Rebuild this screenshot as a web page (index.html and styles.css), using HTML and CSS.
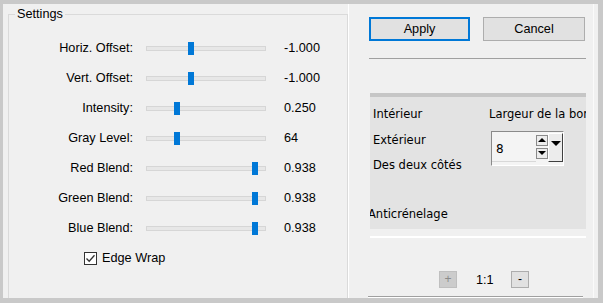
FILE: index.html
```html
<!DOCTYPE html>
<html lang="en">
<head>
  <meta charset="UTF-8" />
  <title>Settings</title>
  <link rel="stylesheet" href="styles.css">
</head>
<body>
  <div class="window">
    <fieldset class="settings">
      <legend>Settings</legend>

      <div class="row"><span class="label">Horiz. Offset:</span><div class="track"><span class="thumb" style="left:41px"></span></div><span class="value">-1.000</span></div>
      <div class="row"><span class="label">Vert. Offset:</span><div class="track"><span class="thumb" style="left:41px"></span></div><span class="value">-1.000</span></div>
      <div class="row"><span class="label">Intensity:</span><div class="track"><span class="thumb" style="left:27px"></span></div><span class="value">0.250</span></div>
      <div class="row"><span class="label">Gray Level:</span><div class="track"><span class="thumb" style="left:27px"></span></div><span class="value">64</span></div>
      <div class="row"><span class="label">Red Blend:</span><div class="track"><span class="thumb" style="left:105px"></span></div><span class="value">0.938</span></div>
      <div class="row"><span class="label">Green Blend:</span><div class="track"><span class="thumb" style="left:105px"></span></div><span class="value">0.938</span></div>
      <div class="row"><span class="label">Blue Blend:</span><div class="track"><span class="thumb" style="left:105px"></span></div><span class="value">0.938</span></div>

      <label class="check">
        <span class="box">
          <svg width="11" height="11" viewBox="0 0 11 11"><path d="M1.5 5.5 L4.2 8.3 L9.5 2.2" fill="none" stroke="#333" stroke-width="1.3"/></svg>
        </span>
        Edge Wrap
      </label>
    </fieldset>

    <div class="side">
      <div class="actions">
        <button class="btn default">Apply</button>
        <button class="btn">Cancel</button>
      </div>
      <div class="rule"></div>
      <div class="bar"></div>

      <div class="panel">
        <div class="col-left">
          <div class="opt">Intérieur</div>
          <div class="opt">Extérieur</div>
          <div class="opt">Des deux côtés</div>
          <div class="anti">Anticrénelage</div>
        </div>
        <div class="col-right">
          <div class="opt">Largeur de la bordure</div>
          <div class="spin">
            <span class="spin-value">8</span>
            <span class="spin-arrows">
              <span class="arrow up"></span>
              <span class="arrow down"></span>
            </span>
            <span class="drop"></span>
          </div>
        </div>
      </div>

      <div class="light-rule"></div>

      <div class="zoom">
        <button class="mini" disabled>+</button>
        <span class="ratio">1:1</span>
        <button class="mini">-</button>
      </div>
      <div class="rule bottom"></div>
    </div>
  </div>
</body>
</html>
```

FILE: styles.css
```css
body {
  margin: 0;
  font-family: "Liberation Sans", Arial, sans-serif;
  font-size: 12.7px;
  color: #000;
}

.window {
  width: 603px;
  height: 303px;
  box-sizing: border-box;
  border-style: solid;
  border-color: #c9c9c9;
  border-width: 4px 5px 5px 3px;
  background: #f0f0f0;
  display: flex;
  overflow: hidden;
}

/* left group box */
.settings {
  flex: none;
  width: 340px;
  box-sizing: border-box;
  margin: 2px 0 0 5px;
  padding: 11px 0 0 0;
  border: 1px solid #dadada;
  border-bottom: none;
  min-width: 0;
}

.settings legend {
  margin-left: 6px;
  padding: 0 2px;
  line-height: 16px;
}

.row {
  display: flex;
  align-items: center;
  height: 30px;
}

.label {
  width: 124px;
  text-align: right;
}

.track {
  position: relative;
  width: 118px;
  height: 3px;
  margin-left: 13px;
  background: #e7e7e7;
  border: 1px solid #d6d6d6;
}

.thumb {
  position: absolute;
  top: -5px;
  width: 6px;
  height: 13px;
  background: #0078d7;
}

.value {
  margin-left: 18px;
}

.check {
  display: flex;
  align-items: center;
  height: 30px;
  margin-left: 75px;
  gap: 5px;
}

.box {
  width: 13px;
  height: 13px;
  box-sizing: border-box;
  border: 1px solid #333;
  background: #fff;
  display: flex;
  align-items: center;
  justify-content: center;
}

/* right column */
.side {
  flex: 1;
  min-width: 0;
  display: flex;
  flex-direction: column;
  padding: 13px 7px 0 20px;
  border-left: 1px solid #fff;
  border-right: 1px solid #fafafa;
  margin-right: 4px;
}

.actions {
  display: flex;
  gap: 13px;
}

.btn {
  width: 102px;
  height: 24px;
  box-sizing: border-box;
  font-family: inherit;
  font-size: 12.7px;
  background: #e1e1e1;
  border: 1px solid #adadad;
  padding: 0;
}

.btn.default {
  width: 101px;
  border: 2px solid #0078d7;
}

.rule {
  height: 1px;
  background: #a0a0a0;
  margin-top: 17px;
}

.bar {
  height: 4px;
  background: #c6c6c6;
  margin: 34px 0 0 1px;
}

.panel {
  height: 132px;
  margin-left: 1px;
  background: #e3e3e3;
  display: flex;
  overflow: hidden;
  font-family: "DejaVu Sans", Verdana, sans-serif;
  font-size: 11.5px;
}

.col-left {
  flex: none;
  width: 116px;
  padding: 5px 0 0 3px;
}

.opt {
  height: 25.5px;
  line-height: 25.5px;
  white-space: nowrap;
}

.anti {
  margin: 25px 0 0 -5px;
  line-height: 20px;
}

.col-right {
  min-width: 0;
  padding-top: 5px;
}

.spin {
  display: flex;
  width: 73px;
  height: 35px;
  box-sizing: border-box;
  margin: 3px 0 0 2px;
  border: 1px solid #8a8a8a;
  border-right-color: #fff;
  border-bottom-color: #fff;
  background: #f4f4f4;
  padding: 2px 0 3px 0;
}

.spin-value {
  flex: 1;
  padding: 8px 0 0 4px;
  font-size: 12px;
  border-bottom: 1px solid #d8d8d8;
}

.spin-arrows {
  display: flex;
  flex-direction: column;
  gap: 2px;
  padding-top: 1px;
}

.arrow {
  width: 12px;
  height: 11px;
  box-sizing: border-box;
  border: 1px solid #8a8a8a;
  background: #ececec;
  display: flex;
  align-items: center;
  justify-content: center;
}

.arrow::after {
  content: "";
  border-left: 4px solid transparent;
  border-right: 4px solid transparent;
}

.arrow.up::after {
  border-bottom: 4px solid #000;
}

.arrow.down::after {
  border-top: 4px solid #000;
}

.drop {
  width: 15px;
  margin-top: -1px;
  box-sizing: border-box;
  border: 1px solid #fff;
  border-right-color: #404040;
  border-bottom-color: #404040;
  background: #ececec;
  display: flex;
  justify-content: center;
  padding-top: 7px;
}

.drop::after {
  content: "";
  height: 0;
  border-left: 5px solid transparent;
  border-right: 5px solid transparent;
  border-top: 5px solid #000;
}

.light-rule {
  height: 2px;
  margin: 7px 0 0 1px;
  background: #fff;
}

.zoom {
  display: flex;
  align-items: center;
  margin-top: 33px;
  padding-left: 70px;
}

.mini {
  width: 18px;
  height: 17px;
  box-sizing: border-box;
  padding: 0;
  font-family: inherit;
  font-size: 12px;
  line-height: 13px;
  background: #e1e1e1;
  border: 1px solid #adadad;
  color: #000;
}

.mini:disabled {
  background: #cccccc;
  border-color: #bfbfbf;
  color: #8a8a8a;
}

.ratio {
  margin: 0 19px;
  width: 16px;
}

.rule.bottom {
  margin: 8px 3px 0 -1px;
  box-shadow: 0 1px 0 #fff;
}
```
